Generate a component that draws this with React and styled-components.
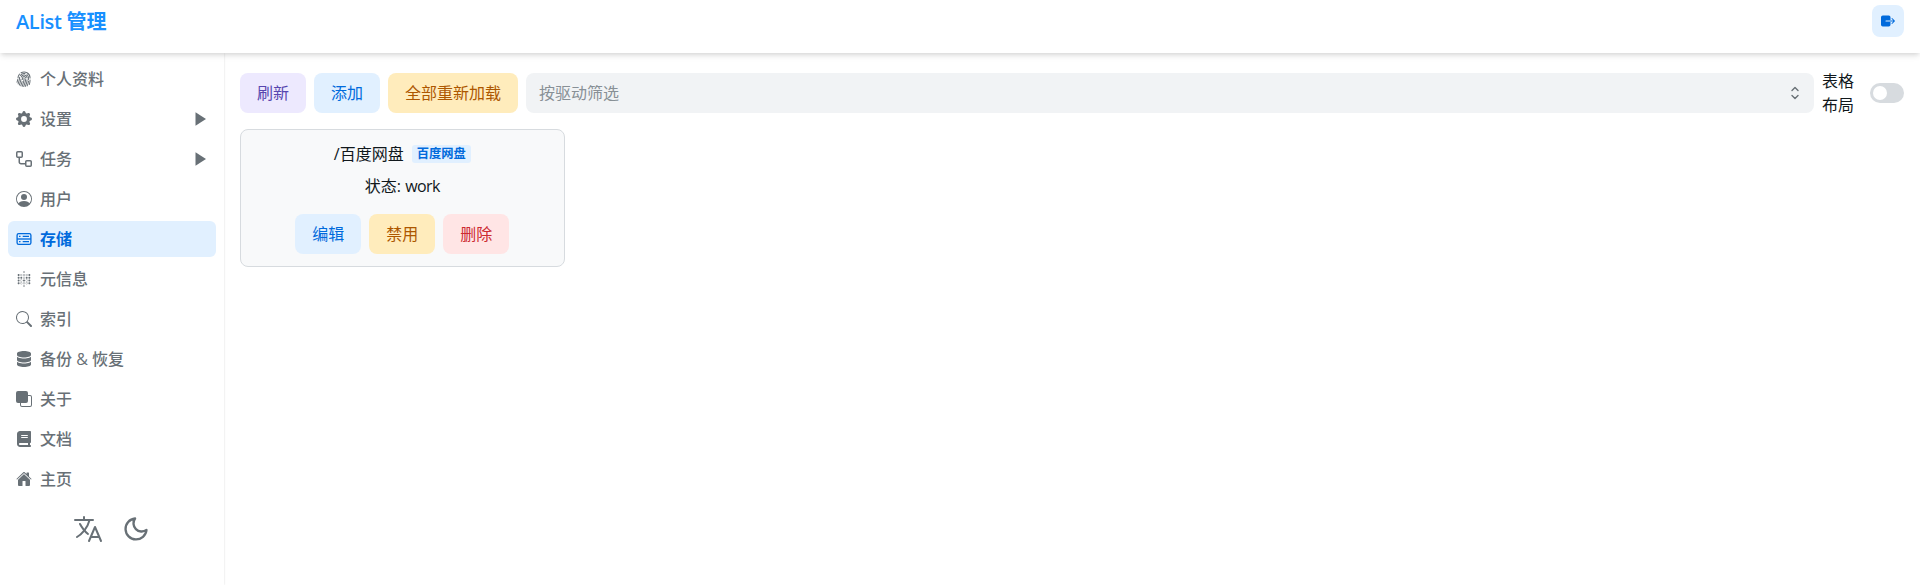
import React from "react";
import styled, { createGlobalStyle } from "styled-components";
import { BsFingerprint, BsGearFill, BsPersonCircle, BsSearch, BsFront } from "react-icons/bs";
import { SiMetabase } from "react-icons/si";
import { FaDatabase, FaBook } from "react-icons/fa6";
import { IoHome, IoExit, IoLanguageOutline } from "react-icons/io5";
import { FiMoon } from "react-icons/fi";

const tones = {
  accent: ["#ede9fe", "#5746af"],
  info: ["#e1f0ff", "#006adc"],
  warning: ["#ffecbc", "#ad5700"],
  danger: ["#ffe5e5", "#cd2b31"],
};

const GlobalStyle = createGlobalStyle`
  *, *::before, *::after { box-sizing: border-box; }
  body {
    margin: 0;
    overflow: hidden;
    background: #fff;
    color: #11181c;
    font: 400 16px/24px "Open Sans", "Noto Sans CJK SC", sans-serif;
  }
  button { font: inherit; }
`;

const Page = styled.div`
  height: 585px;
  display: flex;
  flex-direction: column;
`;

const Header = styled.header`
  position: relative;
  z-index: 1;
  flex: none;
  height: 53px;
  padding: 5px 16px 0;
  display: flex;
  justify-content: space-between;
  align-items: flex-start;
  background: #fff;
  box-shadow: 0 4px 6px -1px rgba(0, 0, 0, 0.1), 0 2px 4px -1px rgba(0, 0, 0, 0.08);
`;

const Title = styled.h1`
  margin: 2px 0 0;
  color: #1890ff;
  font-size: 20px;
  line-height: 30px;
  font-weight: 600;
`;

const Latin = styled.span`
  letter-spacing: ${(p) => p.$tracking};
`;

const LogoutButton = styled.button`
  width: 32px;
  height: 32px;
  padding: 0;
  border: 0;
  border-radius: 8px;
  display: grid;
  place-items: center;
  font-size: 16px;
  background: ${tones.info[0]};
  color: ${tones.info[1]};
`;

const Body = styled.div`
  flex: 1;
  min-height: 0;
  display: flex;
`;

const Sidebar = styled.aside`
  flex: none;
  width: 224px;
  padding: 8px;
  box-shadow: 0 0 2px rgba(0, 0, 0, 0.15);
`;

const Menu = styled.nav`
  display: flex;
  flex-direction: column;
  gap: 4px;
`;

const MenuItem = styled.a`
  height: 36px;
  padding: 0 8px;
  border-radius: 6px;
  display: flex;
  align-items: center;
  gap: 8px;
  font-weight: ${(p) => (p.$active ? 600 : 500)};
  color: ${(p) => (p.$active ? "#006adc" : "#687076")};
  background: ${(p) => (p.$active ? "#e1f0ff" : "transparent")};
`;

const MenuLabel = styled.span`
  flex: 1;
`;

const Arrow = styled.svg`
  width: 11px;
  height: 14px;
  margin-right: 2px;
`;

const SideTools = styled.div`
  margin-top: 16px;
  display: flex;
  justify-content: center;
  gap: 16px;
  color: #687076;
  font-size: 32px;
`;

const MoonIcon = styled(FiMoon)`
  padding: 2px;
`;

const Main = styled.main`
  flex: 1;
  min-width: 0;
  padding: 16px;
  display: flex;
  flex-direction: column;
  align-items: stretch;
  gap: 12px;
`;

const Toolbar = styled.div`
  height: 48px;
  display: flex;
  align-items: center;
  gap: 8px;
`;

const Button = styled.button`
  flex: none;
  height: 40px;
  padding: 0 17px;
  border: 0;
  border-radius: 8px;
  background: ${(p) => tones[p.$tone][0]};
  color: ${(p) => tones[p.$tone][1]};
`;

const Select = styled.div`
  flex: 1;
  height: 40px;
  padding: 0 13px;
  border-radius: 8px;
  display: flex;
  align-items: center;
  justify-content: space-between;
  background: #f1f3f5;
  color: #889096;
`;

const Chevrons = styled.svg`
  width: 12px;
  height: 16px;
  color: #687076;
`;

const SwitchField = styled.label`
  flex: none;
  display: flex;
  align-items: center;
  gap: 16px;
`;

const SwitchLabel = styled.span`
  width: 32px;
`;

const Track = styled.span`
  width: 34px;
  height: 20px;
  padding: 3px;
  border-radius: 10px;
  background: #d7dbdf;
`;

const Thumb = styled.span`
  display: block;
  width: 14px;
  height: 14px;
  border-radius: 50%;
  background: #fff;
`;

const Card = styled.section`
  width: 324.6px;
  height: 138px;
  padding: 12px;
  border: 1px solid #d7dbdf;
  border-radius: 8px;
  display: flex;
  flex-direction: column;
  align-items: center;
  gap: 8px;
  background: #f8f9fa;
`;

const CardTitle = styled.div`
  display: flex;
  align-items: center;
  gap: 8px;
`;

const Badge = styled.span`
  height: 18px;
  padding: 0 5px;
  border-radius: 3px;
  font-size: 12.25px;
  line-height: 18px;
  font-weight: 600;
  background: ${tones.info[0]};
  color: ${tones.info[1]};
`;

const CardActions = styled.div`
  margin-top: 8px;
  display: flex;
  gap: 8px;
`;

function WorkflowIcon() {
  return (
    <svg width="1em" height="1em" viewBox="0 0 16 16" fill="none" stroke="currentColor" strokeWidth="1.5">
      <rect x="0.75" y="0.75" width="5.5" height="5.5" rx="1" />
      <rect x="9.75" y="9.75" width="5.5" height="5.5" rx="1" />
      <path d="M3.25 6.5V11A1.75 1.75 0 0 0 5 12.75H9.5" />
    </svg>
  );
}

function StorageIcon() {
  return (
    <svg width="1em" height="1em" viewBox="0 0 16 16" fill="none" stroke="currentColor" strokeWidth="1.33">
      <rect x="1.1" y="2.6" width="13.8" height="10.8" rx="1.6" />
      <path d="M1.1 8H14.9" />
      <path d="M3 5.3H4.5M6.7 5.3H13M3 10.7H4.5M6.7 10.7H13" strokeWidth="1.2" />
    </svg>
  );
}

const menu = [
  { label: "个人资料", icon: BsFingerprint },
  { label: "设置", icon: BsGearFill, group: true },
  { label: "任务", icon: WorkflowIcon, group: true },
  { label: "用户", icon: BsPersonCircle },
  { label: "存储", icon: StorageIcon, active: true },
  { label: "元信息", icon: SiMetabase },
  { label: "索引", icon: BsSearch },
  { label: "备份 & 恢复", icon: FaDatabase },
  { label: "关于", icon: BsFront },
  { label: "文档", icon: FaBook },
  { label: "主页", icon: IoHome },
];

export default function App() {
  return (
    <Page>
      <GlobalStyle />
      <Header>
        <Title><Latin $tracking="-0.35px">AList </Latin>管理</Title>
        <LogoutButton aria-label="logout"><IoExit /></LogoutButton>
      </Header>
      <Body>
        <Sidebar>
          <Menu>
            {menu.map(({ label, icon: Icon, group, active }) => (
              <MenuItem key={label} $active={active}>
                <Icon />
                <MenuLabel>{label}</MenuLabel>
                {group && (
                  <Arrow viewBox="0 0 11 14"><path d="M0.5 0.3L11 7L0.5 13.7Z" fill="currentColor" /></Arrow>
                )}
              </MenuItem>
            ))}
          </Menu>
          <SideTools>
            <IoLanguageOutline />
            <MoonIcon />
          </SideTools>
        </Sidebar>
        <Main>
          <Toolbar>
            <Button $tone="accent">刷新</Button>
            <Button $tone="info">添加</Button>
            <Button $tone="warning">全部重新加载</Button>
            <Select>
              <span>按驱动筛选</span>
              <Chevrons viewBox="0 0 12 16" fill="none" stroke="currentColor" strokeWidth="1.4" strokeLinecap="round" strokeLinejoin="round">
                <path d="M3 5.5L6 2.5L9 5.5M3 10.5L6 13.5L9 10.5" />
              </Chevrons>
            </Select>
            <SwitchField>
              <SwitchLabel>表格布局</SwitchLabel>
              <Track><Thumb /></Track>
            </SwitchField>
          </Toolbar>
          <Card>
            <CardTitle>/百度网盘<Badge>百度网盘</Badge></CardTitle>
            <div>状态: <Latin $tracking="-0.6px">work</Latin></div>
            <CardActions>
              <Button $tone="info">编辑</Button>
              <Button $tone="warning">禁用</Button>
              <Button $tone="danger">删除</Button>
            </CardActions>
          </Card>
        </Main>
      </Body>
    </Page>
  );
}
